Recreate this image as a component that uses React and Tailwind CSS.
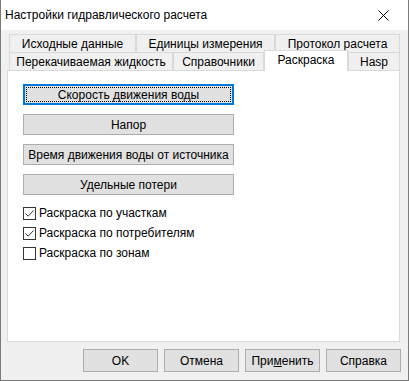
import React from 'react';

const font = { fontFamily: '"Liberation Sans", Arial, sans-serif' };

const Tab = ({ label, w, selected }) => (
  <div
    className={
      selected
        ? 'relative z-10 -mt-[2px] -mb-px flex h-[21px] items-start justify-center border border-b-0 border-[#d9d9d9] bg-white pt-[3px]'
        : 'flex h-[18px] items-center justify-center border border-b-0 border-[#d9d9d9] bg-[#f0f0f0]'
    }
    style={{ width: w }}
  >
    {label}
  </div>
);

const PanelButton = ({ label, focused }) => (
  <div
    className={
      focused
        ? 'flex h-[21px] w-[211px] items-center justify-center border-2 border-[#0078d7] bg-[#e1e1e1] p-px'
        : 'flex h-[21px] w-[211px] items-center justify-center border border-[#adadad] bg-[#e1e1e1]'
    }
  >
    {focused ? (
      <div className="flex h-full w-full items-center justify-center border border-dotted border-black">{label}</div>
    ) : (
      label
    )}
  </div>
);

const Check = ({ label, checked }) => (
  <div className="flex h-[20px] items-center">
    <div className="flex h-[13px] w-[13px] items-center justify-center border border-[#333333] bg-white">
      {checked && (
        <svg width="11" height="11" viewBox="0 0 11 11">
          <path d="M1.5 5.5 L4.2 8.2 L9.5 2.5" fill="none" stroke="#333333" strokeWidth="1" />
        </svg>
      )}
    </div>
    <span className="ml-[3px]">{label}</span>
  </div>
);

const DialogButton = ({ children }) => (
  <div className="flex h-[23px] w-[75px] items-center justify-center border border-[#adadad] bg-[#e1e1e1]">
    {children}
  </div>
);

export default function App() {
  return (
    <div
      className="flex h-[381px] w-[409px] flex-col whitespace-nowrap border border-t-0 border-[#7a7a7a] bg-[#f0f0f0] text-[12px] leading-none text-black"
      style={font}
    >
      <div className="flex h-[30px] items-center justify-between bg-white pl-[4px] pr-[19px]">
        <span>Настройки гидравлического расчета</span>
        <svg width="11" height="11" viewBox="0 0 11 11">
          <path d="M0.5 0.5 L10.5 10.5 M10.5 0.5 L0.5 10.5" stroke="#000" strokeWidth="1" />
        </svg>
      </div>

      <div className="flex flex-1 flex-col px-[6px] pt-[4px]">
        <div className="ml-[2px] flex">
          <Tab label="Исходные данные" w={127} />
          <Tab label="Единицы измерения" w={139} />
          <Tab label="Протокол расчета" w={125} />
        </div>
        <div className="ml-[2px] flex items-end">
          <Tab label="Перекачиваемая жидкость" w={164} />
          <Tab label="Справочники" w={91} />
          <Tab label="Раскраска" w={84} selected />
          <Tab label="Hasp" w={52} />
        </div>
        <div className="flex h-[272px] w-[393px] flex-col border border-[#d9d9d9] bg-white pl-[15px] pt-[13px]">
          <div className="flex flex-col gap-[9px]">
            <PanelButton label="Скорость движения воды" focused />
            <PanelButton label="Напор" />
            <PanelButton label="Время движения воды от источника" />
            <PanelButton label="Удельные потери" />
          </div>
          <div className="mt-[8px] flex flex-col">
            <Check label="Раскраска по участкам" checked />
            <Check label="Раскраска по потребителям" checked />
            <Check label="Раскраска по зонам" />
          </div>
        </div>
        <div className="mt-[7px] flex justify-end gap-[6px] pr-[1px]">
          <DialogButton>OK</DialogButton>
          <DialogButton>Отмена</DialogButton>
          <DialogButton>
            <span>
              При<u>м</u>енить
            </span>
          </DialogButton>
          <DialogButton>Справка</DialogButton>
        </div>
      </div>
    </div>
  );
}
